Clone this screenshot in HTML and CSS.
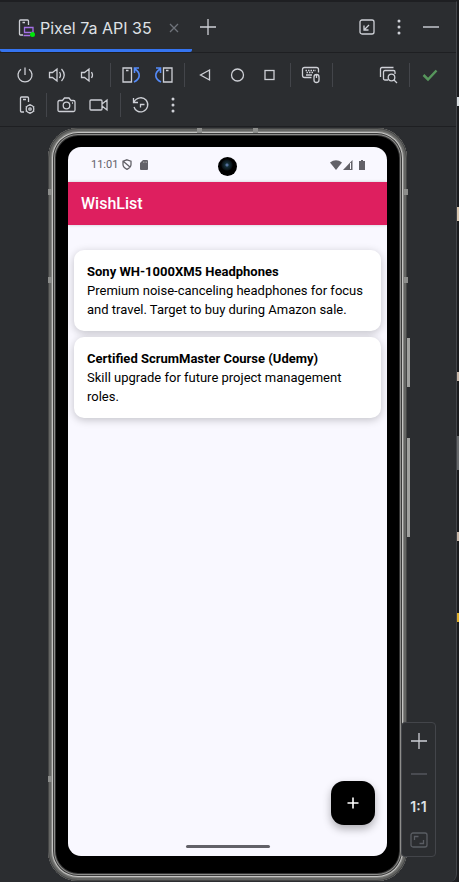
FILE: index.html
```html
<!DOCTYPE html>
<html lang="en">
<head>
<meta charset="utf-8">
<meta name="viewport" content="width=device-width, initial-scale=1">
<title>Pixel 7a API 35</title>
<link rel="stylesheet" href="styles.css">
</head>
<body>
<main class="panel">
  <header class="tabs">
    <div class="tab">
      <svg class="icon" width="20" height="20" viewBox="0 0 20 20"><path d="M7 17H4.500Q3.500 17 3.500 16V3Q3.500 2 4.500 2H11.500Q12.500 2 12.500 3V7M6.500 4.500H9"/><path d="M8.500 9.500H17V14.500H8.500ZM7.500 17.500H14" stroke="#a571e6"/><circle cx="16.500" cy="16.500" r="2.500" fill="#00e609" stroke="none"/></svg>
      <span class="tab-name">Pixel 7a API 35</span>
      <button class="tab-close" aria-label="Close tab"><svg class="icon dim" width="10" height="10" viewBox="0 0 10 10"><path d="M1 1L9 9M9 1L1 9"/></svg></button>
    </div>
    <button class="tool" aria-label="Add device"><svg class="icon" width="18" height="18" viewBox="0 0 18 18"><path d="M9 1V17M1 9H17"/></svg></button>
    <span class="spacer"></span>
    <button class="tool" aria-label="Window mode"><svg class="icon" width="16" height="16" viewBox="0 0 16 16"><rect x="1" y="1" width="14" height="14" rx="2"/><path d="M10 6L5 11M5 6.500V11H9.500"/></svg></button>
    <button class="tool" aria-label="Options"><svg class="icon solid" width="16" height="16" viewBox="0 0 16 16"><circle cx="8" cy="2" r="1.500"/><circle cx="8" cy="8" r="1.500"/><circle cx="8" cy="14" r="1.500"/></svg></button>
    <button class="tool" aria-label="Hide"><svg class="icon" width="16" height="16" viewBox="0 0 16 16"><path d="M0 8H16" stroke="#9da0a6" stroke-width="2"/></svg></button>
  </header>

  <div class="toolbar">
    <div class="tools">
      <button class="tool" aria-label="Power"><svg class="icon" width="18" height="18" viewBox="0 0 18 18"><path d="M9 1.500V9M5 3.200A7 7 0 1 0 13 3.200"/></svg></button>
      <button class="tool" aria-label="Volume up"><svg class="icon" width="18" height="18" viewBox="0 0 18 18"><path d="M1.500 6.500H4.500L9 3V15L4.500 11.500H1.500ZM11.500 6Q13.500 9 11.500 12M13.500 3Q19 9 13.500 15"/></svg></button>
      <button class="tool" aria-label="Volume down"><svg class="icon" width="18" height="18" viewBox="0 0 18 18"><path d="M1.500 6.500H4.500L9 3V15L4.500 11.500H1.500ZM11.500 6Q13.500 9 11.500 12"/></svg></button>
      <span class="divider"></span>
      <button class="tool" aria-label="Rotate left"><svg class="icon" width="20" height="18" viewBox="0 0 20 18"><path d="M2 2H10.500V16H2ZM5 4.500H7.500"/><path class="blue" d="M13 16C19.500 13 20 7 14 3M13.500 7V2H18"/></svg></button>
      <button class="tool" aria-label="Rotate right"><svg class="icon" width="20" height="18" viewBox="0 0 20 18"><path d="M10.500 2H19V16H10.500ZM13 4.500H15.500"/><path class="blue" d="M8 16C1.500 13 1 7 7 3M3 2H7.500V7"/></svg></button>
      <span class="divider"></span>
      <button class="tool" aria-label="Back"><svg class="icon" width="16" height="16" viewBox="0 0 16 16"><path d="M12.500 3V13L3.500 8Z"/></svg></button>
      <button class="tool" aria-label="Home"><svg class="icon" width="16" height="16" viewBox="0 0 16 16"><circle cx="8.500" cy="8" r="6"/></svg></button>
      <button class="tool" aria-label="Overview"><svg class="icon" width="16" height="16" viewBox="0 0 16 16"><rect x="4" y="3.500" width="9" height="9"/></svg></button>
      <span class="divider"></span>
      <button class="tool" aria-label="Hardware input"><svg class="icon" width="20" height="20" viewBox="0 0 20 20"><path d="M10.500 12.500H3.500Q1.500 12.500 1.500 10.500V4.500Q1.500 2.500 3.500 2.500H15.500Q17.500 2.500 17.500 4.500V7.500M5 10H11"/><path d="M4.500 5.500H15M5.500 7.500H13" stroke-dasharray="1.500 1"/><rect x="13" y="9.500" width="5" height="8" rx="2.500"/><path d="M15.500 10V13"/></svg></button>
      <span class="divider"></span>
      <span class="spacer"></span>
      <button class="tool" aria-label="Inspect UI"><svg class="icon" width="20" height="20" viewBox="0 0 20 20"><path d="M2.500 12V4Q2.500 2.500 4 2.500H15.500M10 15H7Q5.500 15 5.500 13.500V7Q5.500 5.500 7 5.500H15.500Q17 5.500 17 7V9"/><circle cx="13.500" cy="12.500" r="3.300"/><path d="M16 15L19 18"/></svg></button>
      <span class="divider"></span>
      <button class="tool" aria-label="Ready"><svg class="icon" width="18" height="18" viewBox="0 0 18 18"><path d="M2.500 9L7 13.500L15.500 4.500" stroke="#57965c" stroke-width="2.500"/></svg></button>
    </div>
    <div class="tools">
      <button class="tool" aria-label="Device settings"><svg class="icon" width="20" height="20" viewBox="0 0 20 20"><path d="M9 17H6.500Q5.500 17 5.500 16V3Q5.500 2 6.500 2H12.500Q13.500 2 13.500 3V7M8 4.500H11"/><circle cx="15" cy="14" r="3.800"/><circle cx="15" cy="14" r="1.200"/><path d="M15 9V10.500M15 17.500V19M10.700 11.500L12 12.300M18 15.700L19.300 16.500M10.700 16.500L12 15.700M18 12.300L19.300 11.500"/></svg></button>
      <span class="divider"></span>
      <button class="tool" aria-label="Screenshot"><svg class="icon" width="20" height="18" viewBox="0 0 20 18"><path d="M2.500 4.500H5.500L7.500 2H12L14 4.500H16.500Q18 4.500 18 6V14Q18 15.500 16.500 15.500H2.500Q1 15.500 1 14V6Q1 4.500 2.500 4.500Z"/><circle cx="9.500" cy="9.500" r="3.300"/><path d="M15 7H16"/></svg></button>
      <button class="tool" aria-label="Record"><svg class="icon" width="20" height="18" viewBox="0 0 20 18"><path d="M2 4H12Q13 4 13 5V13Q13 14 12 14H2Q1 14 1 13V5Q1 4 2 4ZM13 8L18 4V14L13 10"/></svg></button>
      <span class="divider"></span>
      <button class="tool" aria-label="Snapshots"><svg class="icon" width="18" height="18" viewBox="0 0 18 18"><path d="M1.500 2V6.500H6M2 6C4.500 1 11 .5 14 4C17.500 8 15.500 14 11 15.500C7 17 3 14.500 2 11M8.500 11.500V8.500H12.500"/></svg></button>
      <button class="tool" aria-label="More"><svg class="icon solid" width="16" height="16" viewBox="0 0 16 16"><circle cx="8" cy="2" r="1.500"/><circle cx="8" cy="8" r="1.500"/><circle cx="8" cy="14" r="1.500"/></svg></button>
    </div>
  </div>

  <section class="stage">
    <div class="phone">
      <i class="band band-l"></i><i class="band band-r"></i>
      <i class="band band-l band-mid"></i><i class="band band-r band-mid"></i>
      <i class="band band-l band-low"></i>
      <i class="band band-top"></i><i class="band band-top band-top-end"></i>
      <i class="key key-power"></i><i class="key key-volume"></i>
      <div class="screen">
        <div class="status">
          <span class="clock">11:01</span>
          <svg width="10" height="11" viewBox="0 0 10 11"><path d="M5 .8L9 2.200V5.500Q9 8.500 5 10.300Q1 8.500 1 5.500V2.200ZM1.500 2.500L8 8" fill="none" stroke="#626168" stroke-width="1.300"/></svg>
          <svg class="sd" width="8" height="10" viewBox="0 0 8 10"><path d="M3 0H7Q8 0 8 1V9Q8 10 7 10H1Q0 10 0 9V3Z"/><path d="M3.500 1.500V3M5 1.500V3M6.500 1.500V3" stroke="#aaa" stroke-width=".7"/></svg>
          <span class="spacer"></span>
          <svg class="wifi" width="12" height="10" viewBox="0 0 12 10"><path d="M0 2.500Q6-2 12 2.500L6 10Z"/></svg>
          <svg width="10" height="10" viewBox="0 0 10 10"><path d="M0 10L9.500 0V10Z"/><path d="M7.500 3V9" stroke="#f9f8ff"/></svg>
          <svg class="battery" width="6" height="10" viewBox="0 0 6 10"><path d="M2 0H4V1H6V10H0V1H2Z"/></svg>
          <i class="camera"></i>
        </div>
        <div class="appbar"><h1>WishList</h1></div>
        <ul class="wishes">
          <li class="wish"><h2>Sony WH-1000XM5 Headphones</h2><p>Premium noise-canceling headphones for focus and travel. Target to buy during Amazon sale.</p></li>
          <li class="wish"><h2>Certified ScrumMaster Course (Udemy)</h2><p>Skill upgrade for future project management roles.</p></li>
        </ul>
        <button class="fab" aria-label="Add wish"><svg width="12" height="12" viewBox="0 0 12 12"><path d="M6 .5V11.500M.5 6H11.500" stroke="#fff" stroke-width="1.600"/></svg></button>
        <div class="home-bar"></div>
      </div>
    </div>
    <div class="zoom">
      <button class="zoom-btn" aria-label="Zoom in"><svg class="icon" width="18" height="18" viewBox="0 0 18 18"><path d="M9 1V17M1 9H17"/></svg></button>
      <button class="zoom-btn" aria-label="Zoom out"><svg class="icon off" width="18" height="18" viewBox="0 0 18 18"><path d="M1 9H17"/></svg></button>
      <button class="zoom-btn">1:1</button>
      <button class="zoom-btn" aria-label="Fit"><svg class="icon off" width="18" height="16" viewBox="0 0 18 16"><rect x="1" y="1" width="16" height="14" rx="2"/><path d="M4.500 8V4.500H8.500M13.500 8V11.500H9.500"/></svg></button>
    </div>
  </section>
</main>
<div class="edge"></div>
</body>
</html>
```
FILE: styles.css
```css
* { box-sizing: border-box; }

body {
  margin: 0;
  min-height: 100vh;
  display: flex;
  background: #1e1f22;
  color: #dfe1e5;
  font-family: Inter, "Liberation Sans", sans-serif;
}

button {
  padding: 0;
  border: 0;
  background: none;
  color: inherit;
  font: inherit;
  display: flex;
  align-items: center;
  justify-content: center;
}

svg { display: block; flex: none; }
.icon { fill: none; stroke: #ced0d6; stroke-width: 1.3; }
.icon.solid { fill: #ced0d6; stroke: none; }
.icon.dim { stroke: #6f737a; }
.icon.off { stroke: #5a5d63; }
.blue { stroke: #548af7; stroke-width: 1.6; }
.spacer { flex: 1; }

.panel {
  flex: 1;
  min-width: 0;
  display: flex;
  flex-direction: column;
  margin-top: 1px;
  border-top: 1px solid #1e1f22;
  border-right: 1px solid #43454a;
  border-bottom-right-radius: 8px;
  background: #2b2d30;
}

.edge {
  width: 2px;
  background:
    linear-gradient(#d8dde0, #d8dde0) 0 97px / 2px 9px no-repeat,
    linear-gradient(#d9c7b0, #d9c7b0) 0 207px / 2px 14px no-repeat,
    linear-gradient(#c9b8a8, #c9b8a8) 0 372px / 2px 9px no-repeat,
    linear-gradient(#66686a, #66686a) 0 436px / 2px 34px no-repeat,
    linear-gradient(#c9b8a8, #c9b8a8) 0 532px / 2px 9px no-repeat,
    linear-gradient(#e0b02c, #e0b02c) 0 613px / 2px 9px no-repeat,
    #1b1c1e;
}

.tabs {
  display: flex;
  height: 51px;
  padding-right: 9px;
  border-bottom: 1px solid #1e1f22;
}
.tab {
  display: flex;
  align-items: center;
  width: 192px;
  padding: 5px 12px 0 16px;
  border-bottom: 3px solid #3574f0;
  border-radius: 0 0 2px 2px;
}
.tab-name { margin-left: 4px; font-size: 16px; white-space: nowrap; }
.tab-close { width: 12px; height: 20px; margin-left: auto; }

.tool { width: 32px; flex: none; }

.toolbar { padding: 7px 10px 6px 9px; border-bottom: 1px solid #1e1f22; }
.tools { display: flex; height: 30px; }
.divider { width: 1px; margin: 3px 4px 3px 5px; background: #43454a; }

.stage {
  position: relative;
  flex: 1;
  display: flex;
  padding: 1px 49px 1px 48px;
}

.phone {
  position: relative;
  flex: 1;
  min-width: 0;
  display: flex;
  padding: 19px 20px 25px;
  border-radius: 30px;
  background: #000;
  box-shadow:
    inset 0 0 0 1px #444545,
    inset 0 0 0 3px #646563,
    inset 0 0 0 4px #858583,
    inset 0 0 0 5px #c4c4c2,
    inset 0 0 0 6px #3a3a3a,
    inset 0 0 0 7px #8e8e8c,
    inset 0 0 0 8px #333;
}
.band { position: absolute; background: #8c8d8b; width: 4px; height: 6px; top: 61px; }
.band-l { left: 0; }
.band-r { right: -1px; }
.band-mid { top: 149px; }
.band-low { top: 648px; }
.band-top { left: 149px; top: 0; width: 5px; height: 5px; }
.band-top-end { left: 205px; }
.key { position: absolute; right: -3px; width: 3px; background: #a0a19f; }
.key-power { top: 210px; height: 49px; }
.key-volume { top: 310px; height: 99px; }

.screen {
  position: relative;
  flex: 1;
  min-width: 0;
  overflow: hidden;
  display: flex;
  flex-direction: column;
  border-radius: 13px;
  background: #f9f8ff;
  color: #000;
  font-family: Roboto, "Liberation Sans", sans-serif;
}

.status {
  position: relative;
  display: flex;
  align-items: center;
  height: 35px;
  padding: 0 22px 0 23px;
  fill: #626168;
  color: #626168;
}
.clock { margin-right: 4px; font-size: 11px; line-height: 14px; }
.sd { margin-left: 8px; }
.wifi { margin-right: 1px; }
.battery { margin-left: 6px; }
.camera {
  position: absolute;
  left: 50%;
  top: 10px;
  width: 19px;
  height: 19px;
  margin-left: -10px;
  border-radius: 50%;
  background: radial-gradient(circle at 9px 8px, #55709c 0 1px, #16303a 2px, #0a1216 5px, #000 6px);
}

.appbar {
  display: flex;
  align-items: center;
  height: 43px;
  padding: 0 13px;
  background: #de1f5f;
  color: #fff;
  box-shadow: 0 0 3px #0003;
}
h1 { margin: 0; font-size: 16px; font-weight: 500; }

.wishes {
  display: flex;
  flex-direction: column;
  gap: 6px;
  margin: 0;
  padding: 25px 6px;
  list-style: none;
}
.wish {
  padding: 12px 13px;
  border-radius: 10px;
  background: #fff;
  box-shadow: 0 2px 8px #00000038;
  font-size: 13px;
  line-height: 19px;
}
h2 { margin: 0; font-size: inherit; font-weight: 700; }
p { margin: 0; }

.fab {
  position: absolute;
  right: 12px;
  bottom: 31px;
  width: 44px;
  height: 44px;
  border-radius: 13px;
  background: #000;
  box-shadow: 0 4px 8px #0000004d;
}
.home-bar {
  align-self: center;
  width: 84px;
  height: 3px;
  margin: auto 0 8px;
  border-radius: 2px;
  background: #626168;
}

.zoom {
  position: absolute;
  right: 20px;
  bottom: 25px;
  width: 35px;
  padding: 1px 0 0;
  border: 1px solid #43454a;
  border-radius: 4px;
  background: #2b2d30;
  font-size: 14px;
  font-weight: 600;
}
.zoom-btn { width: 100%; height: 33px; }
```
